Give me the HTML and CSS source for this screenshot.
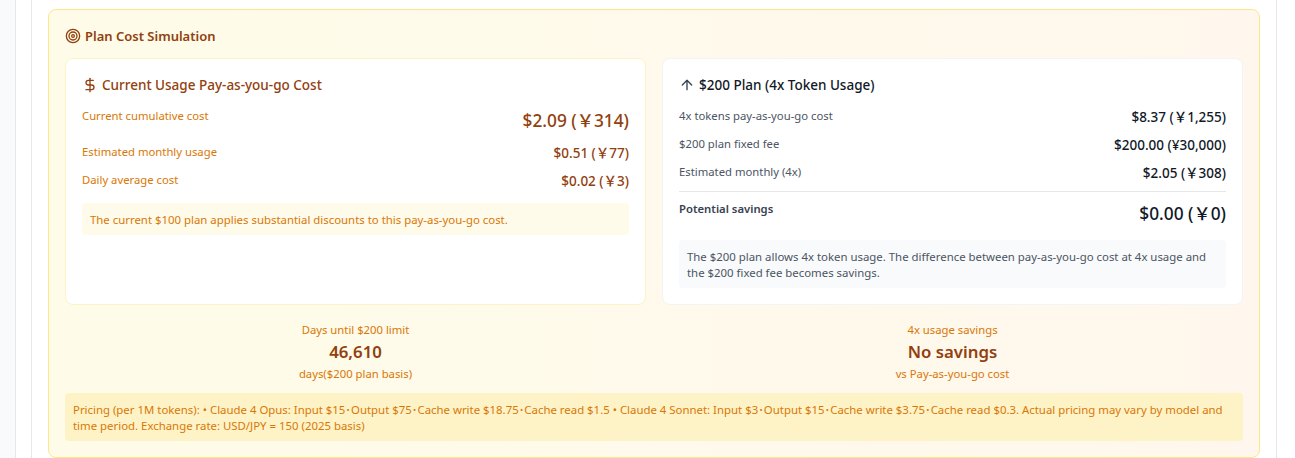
FILE: index.html
```html
<!DOCTYPE html>
<html lang="en">
<head>
  <meta charset="UTF-8">
  <title>Plan Cost Simulation</title>
  <link rel="stylesheet" href="styles.css">
</head>
<body>
  <div class="shell">
    <div class="panel">
      <section class="sim">
        <h3 class="sim-title">
          <svg class="icon-target" viewBox="0 0 24 24" fill="none" stroke="currentColor" stroke-width="2" stroke-linecap="round" stroke-linejoin="round">
            <circle cx="12" cy="12" r="10"/><circle cx="12" cy="12" r="6"/><circle cx="12" cy="12" r="2"/>
          </svg>
          Plan Cost Simulation
        </h3>
        <div class="cards">
          <div class="card card-current">
            <h4 class="card-title">
              <svg viewBox="0 0 24 24" fill="none" stroke="currentColor" stroke-width="2" stroke-linecap="round" stroke-linejoin="round">
                <line x1="12" y1="2" x2="12" y2="22"/><path d="M17 5H9.5a3.5 3.5 0 0 0 0 7h5a3.5 3.5 0 0 1 0 7H6"/>
              </svg>
              Current Usage Pay-as-you-go Cost
            </h4>
            <div class="rows">
              <div class="row"><span class="label">Current cumulative cost</span><span class="value value-big">$2.09 (￥314)</span></div>
              <div class="row"><span class="label">Estimated monthly usage</span><span class="value">$0.51 (￥77)</span></div>
              <div class="row"><span class="label">Daily average cost</span><span class="value">$0.02 (￥3)</span></div>
            </div>
            <div class="note note-amber">The current $100 plan applies substantial discounts to this pay-as-you-go cost.</div>
          </div>
          <div class="card card-plan">
            <h4 class="card-title">
              <svg viewBox="0 0 24 24" fill="none" stroke="currentColor" stroke-width="2" stroke-linecap="round" stroke-linejoin="round">
                <line x1="12" y1="19" x2="12" y2="5"/><polyline points="5 12 12 5 19 12"/>
              </svg>
              $200 Plan (4x Token Usage)
            </h4>
            <div class="rows">
              <div class="row"><span class="label">4x tokens pay-as-you-go cost</span><span class="value">$8.37 (￥1,255)</span></div>
              <div class="row"><span class="label">$200 plan fixed fee</span><span class="value">$200.00 (¥30,000)</span></div>
              <div class="row"><span class="label">Estimated monthly (4x)</span><span class="value">$2.05 (￥308)</span></div>
              <div class="row row-total"><span class="label">Potential savings</span><span class="value value-big">$0.00 (￥0)</span></div>
            </div>
            <div class="note note-slate">The $200 plan allows 4x token usage. The difference between pay-as-you-go cost at 4x usage and the $200 fixed fee becomes savings.</div>
          </div>
        </div>
        <div class="stats">
          <div class="stat">
            <div class="stat-label">Days until $200 limit</div>
            <div class="stat-value">46,610</div>
            <div class="stat-label">days($200 plan basis)</div>
          </div>
          <div class="stat">
            <div class="stat-label">4x usage savings</div>
            <div class="stat-value">No savings</div>
            <div class="stat-label">vs Pay-as-you-go cost</div>
          </div>
        </div>
        <div class="pricing">Pricing (per 1M tokens): • Claude 4 Opus: Input $15･Output $75･Cache write $18.75･Cache read $1.5 • Claude 4 Sonnet: Input $3･Output $15･Cache write $3.75･Cache read $0.3. Actual pricing may vary by model and time period. Exchange rate: USD/JPY = 150 (2025 basis)</div>
      </section>
    </div>
  </div>
</body>
</html>
```

FILE: styles.css
```css
* {
  margin: 0;
  padding: 0;
  box-sizing: border-box;
}

html, body {
  height: 458px;
  overflow: hidden;
}

body {
  font-family: 'Noto Sans', 'Noto Sans CJK JP', sans-serif;
  background: #f9fafb;
  padding-left: 15px;
}

.shell {
  height: 100%;
  background: #fff;
  border-left: 1px solid #e5e7eb;
  padding-left: 15px;
}

.panel {
  height: 100%;
  width: 1246px;
  background: #fff;
  border-left: 1px solid #e5e7eb;
  border-right: 1px solid #e5e7eb;
  padding: 9px 16px 0;
}

.sim {
  height: 449px;
  padding: 16px;
  background: linear-gradient(to right, #fefce8, #fff7ed);
  border: 1px solid #fde68a;
  border-radius: 8px;
}

.sim-title {
  display: flex;
  align-items: center;
  gap: 4px;
  font-size: 13px;
  font-weight: 600;
  line-height: 20px;
  color: #92400e;
  margin-bottom: 12px;
}

.icon-target {
  width: 16px;
  height: 16px;
}

.cards {
  display: grid;
  grid-template-columns: 1fr 1fr;
  gap: 16px;
}

.card {
  height: 247px;
  padding: 16px;
  background: #fff;
  border: 1px solid #fef3c7;
  border-radius: 8px;
}

.card-plan {
  border-color: #f3f4f6;
}

.card-title {
  display: flex;
  align-items: center;
  gap: 4px;
  font-size: 13.5px;
  font-weight: 500;
  line-height: 20px;
  margin-bottom: 12px;
}

.card-title svg {
  width: 16px;
  height: 16px;
}

.card-current .card-title {
  color: #92400e;
}

.card-plan .card-title {
  color: #111827;
}

.card-plan .card-title svg {
  color: #374151;
}

.rows {
  display: flex;
  flex-direction: column;
  gap: 8px;
}

.row {
  display: flex;
  justify-content: space-between;
  align-items: flex-start;
}

.label {
  font-size: 11.3px;
  line-height: 16px;
  padding-top: 1px;
}

.value {
  font-size: 13.5px;
  font-weight: 500;
  line-height: 20px;
}

.value-big {
  font-size: 17.3px;
  line-height: 28px;
}

.card-current .label {
  color: #d97706;
}

.card-current .value {
  color: #92400e;
}

.card-plan .label {
  color: #4b5563;
}

.card-plan .value {
  color: #111827;
}

.row-total {
  border-top: 1px solid #e5e7eb;
  padding-top: 8px;
}

.row-total .label {
  font-weight: 600;
  color: #374151;
}

.note {
  margin-top: 12px;
  padding: 9px 8px 7px;
  border-radius: 4px;
  font-size: 11.4px;
  line-height: 16px;
}

.note-amber {
  background: #fffbeb;
  color: #d97706;
}

.note-slate {
  background: #f9fafb;
  color: #4b5563;
}

.stats {
  display: grid;
  grid-template-columns: 1fr 1fr;
  gap: 16px;
  margin-top: 17px;
  text-align: center;
}

.stat-label {
  font-size: 11.3px;
  line-height: 16px;
  color: #d97706;
}

.stat-value {
  font-size: 16.8px;
  font-weight: 600;
  line-height: 28px;
  color: #92400e;
}

.pricing {
  margin-top: 11px;
  padding: 9px 8px 7px;
  background: #fef3c7;
  border-radius: 4px;
  font-size: 11.4px;
  line-height: 16px;
  color: #d97706;
}
```
